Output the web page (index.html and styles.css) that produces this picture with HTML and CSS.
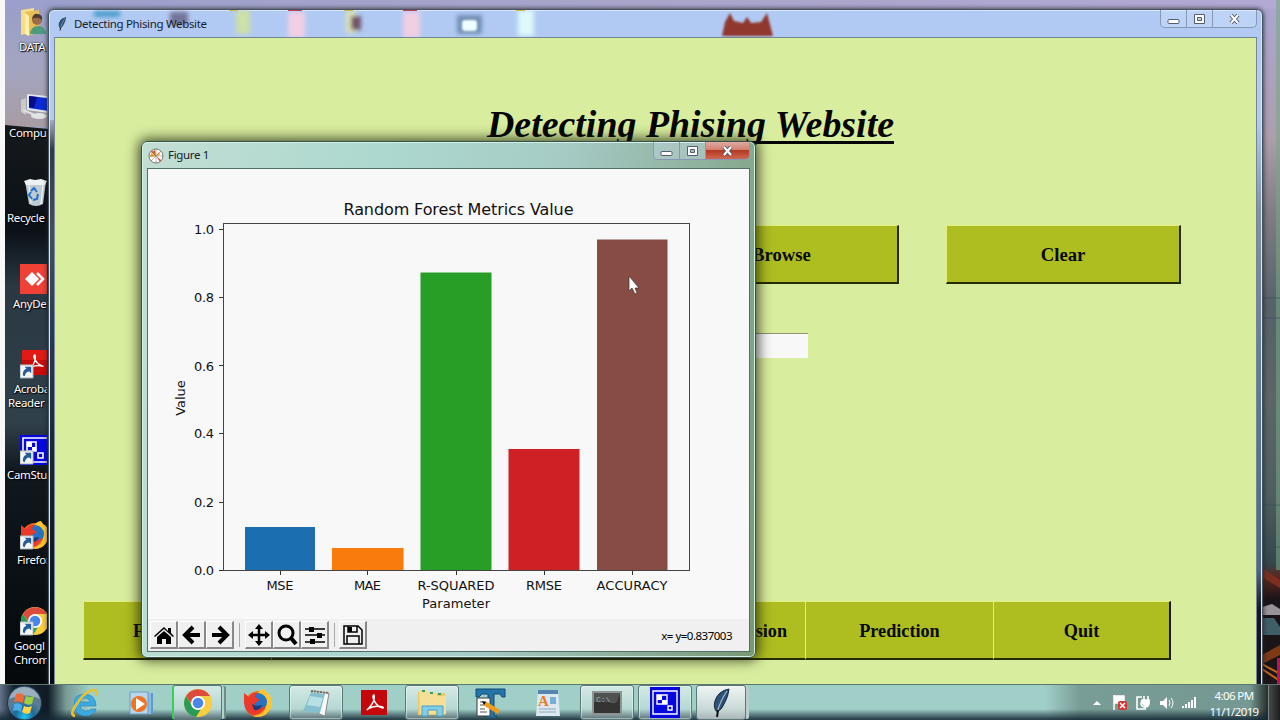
FILE: index.html
```html
<!DOCTYPE html>
<html lang="en">
<head>
    <meta charset="UTF-8">
    <title>Detecting Phising Website</title>
    <link rel="stylesheet" href="styles.css">
</head>
<body>
<div class="desktop">

    <svg class="wallpaper" width="1280" height="720">
        <defs>
            <linearGradient id="skyLeft" x1="0" y1="0" x2="0" y2="1">
                <stop offset="0" stop-color="#9a9fc8"/>
                <stop offset=".5" stop-color="#a3a5c0"/>
                <stop offset="1" stop-color="#a89ca4"/>
            </linearGradient>
            <linearGradient id="ground" x1="0" y1="0" x2="0" y2="1">
                <stop offset="0" stop-color="#15191c"/>
                <stop offset=".18" stop-color="#0b1117"/>
                <stop offset=".27" stop-color="#293843"/>
                <stop offset=".5" stop-color="#30404b"/>
                <stop offset=".58" stop-color="#10181e"/>
                <stop offset="1" stop-color="#030609"/>
            </linearGradient>
            <linearGradient id="skyTop" x1="0" y1="0" x2="1" y2="0">
                <stop offset="0" stop-color="#9aa0cb"/>
                <stop offset=".5" stop-color="#a9a5ca"/>
                <stop offset="1" stop-color="#b2a9d4"/>
            </linearGradient>
            <linearGradient id="rightSide" x1="0" y1="0" x2="0" y2="1">
                <stop offset="0" stop-color="#aaa6cf"/>
                <stop offset=".18" stop-color="#ad9eae"/>
                <stop offset=".28" stop-color="#827f86"/>
                <stop offset=".42" stop-color="#56616a"/>
                <stop offset=".55" stop-color="#5c6666"/>
                <stop offset=".68" stop-color="#4f5e60"/>
                <stop offset=".78" stop-color="#35464d"/>
                <stop offset=".8" stop-color="#5b261d"/>
                <stop offset=".83" stop-color="#1b1418"/>
                <stop offset="1" stop-color="#1d1516"/>
            </linearGradient>
        </defs>
        <rect width="1280" height="720" fill="url(#skyTop)"/>
        <rect y="9" width="60" height="118" fill="url(#skyLeft)"/>
        <path d="M5 125 60 130V720H5Z" fill="url(#ground)"/>
        <rect x="1256" y="9" width="24" height="711" fill="url(#rightSide)"/>
        <rect x="1276" width="4" height="570" fill="#79a882" opacity=".55"/>
        <path d="M1262 298h18M1262 318h18M1262 505h18M1262 547h18" stroke="#344c5c" opacity=".6"/>
        <path d="M1262 568l18 12v8l-18-11z" fill="#7c2f20"/>
        <path d="M1262 607l10-3 8 5v6h-18z" fill="#99939a"/>
        <path d="M1262 618h12l6 9v8h-18z" fill="#3f5f68"/>
        <path d="M1262 655l18-10v10l-18 9z" fill="#7e3a16"/>
        <path d="M1262 664l18 10M1262 669l18 12" stroke="#c56a1d" stroke-width="2"/>
        <path d="M1277 658h3v26h-3z" fill="#a71d58"/>
        <rect width="5" height="720" fill="#f8f8f8"/>
    </svg>

    <div class="shortcuts">
        <div class="shortcut data">
            <svg width="28" height="30" viewBox="0 0 28 30"><path d="M1 3l13-2v24L1 28z" fill="#f6dc87"/><path d="M5 5l14-2v23L7 29z" fill="#e7bf58"/><path d="M5 6l4 3v20l-4-2z" fill="#fff0a9"/><circle cx="17" cy="13" r="5" fill="#9b6b4a"/><path d="M12 12q1-6 6-5 5 1 4 6-4-4-10-1z" fill="#4c3b32"/><path d="M10 27q1-8 8-8t8 8z" fill="#4d9b7d"/></svg>
            <span>DATA</span>
        </div>
        <div class="shortcut computer">
            <svg width="28" height="30" viewBox="0 0 28 30"><path d="M1 7l5-2v17l-5-3z" fill="#c9ccc4"/><path d="M7 1l21 2v17L7 17z" fill="#dfe6ef"/><path d="M9 3l19 2v13L9 15z" fill="#0b2bd2"/><path d="M9 3l8 1-3 11-5-1z" fill="#0a0c87"/><path d="M3 17l14 6" stroke="#dfe3e5" stroke-width="2"/><ellipse cx="19" cy="23" rx="8" ry="3" fill="#dfe3e5"/></svg>
            <span>Compu</span>
        </div>
        <div class="shortcut recycle">
            <svg width="28" height="30" viewBox="0 0 28 30"><path d="M5 3h21l-3 23q-7 4-14 0z" fill="#bfcbd3"/><path d="M4 3l6-2 5 1 6-1 6 2-2 4H6z" fill="#edf1f3"/><path d="M9 7l2 18M23 7l-2 19" stroke="#f5f9fa"/><path d="M11 13l3-3 3 4M18 16l-1 5-4 1M12 21l-3-4 2-3" fill="none" stroke="#2170c9" stroke-width="2"/></svg>
            <span>Recycle</span>
        </div>
        <div class="shortcut anydesk">
            <svg width="28" height="30" viewBox="0 0 28 30"><path d="M0 0h28v30H0z" fill="#ef4135"/><path d="M12 8l7 7-7 7-7-7z" fill="#fff"/><path d="M17 9l6 6-6 6" fill="none" stroke="#fff" stroke-width="2.5"/></svg>
            <span>AnyDe</span>
        </div>
        <div class="shortcut acrobat">
            <svg width="28" height="30" viewBox="0 0 28 30"><path d="M2 1h26v25H2z" fill="#c80b0b"/><path d="M2 1h26v10H2z" fill="#e11a16"/><path d="M15 6c-3 0 0 8 7 11 4 1-4-2-10 1-3 3 5-5 3-12z" fill="none" stroke="#fff" stroke-width="1.300"/><use href="#link"/></svg>
            <span>Acroba<br>Reader I</span>
        </div>
        <div class="shortcut cam">
            <svg width="28" height="30" viewBox="0 0 28 30"><path d="M0 0h28v30H0z" fill="#0505e2"/><path d="M28 3H3v24h25M7 7h9v9H7zM18 18h5v5h-5z" fill="none" stroke="#fff" stroke-width="1.600"/><path d="M7 7h5v5H7zM12 12h4v4h-4z" fill="#fff"/><use href="#link"/></svg>
            <span>CamStu</span>
        </div>
        <div class="shortcut fox">
            <svg width="28" height="30" viewBox="0 0 28 30"><use href="#firefox" width="30" height="30"/><use href="#link"/></svg>
            <span>Firefo:</span>
        </div>
        <div class="shortcut google">
            <svg width="28" height="30" viewBox="0 0 28 30"><use href="#chrome" width="30" height="30"/><use href="#link"/></svg>
            <span>Googl<br>Chrom</span>
        </div>
    </div>

    <!-- main Tk window -->
    <div class="window main-window">
        <svg class="glass" width="1213" height="28">
            <filter id="soft" x="-30%" y="-30%" width="160%" height="160%"><feGaussianBlur stdDeviation="2"/></filter>
            <g filter="url(#soft)">
                <path d="M45 1h26v6H45z" fill="#4c9ccb"/>
                <path d="M121 2h18v13h-18z" fill="#757499"/>
                <path d="M187 0h14v24h-14z" fill="#cce0a8"/>
                <path d="M239 2h17v26h-17z" fill="#f1cfe5"/>
                <path d="M297 1h10v22h-10z" fill="#dae3b4"/>
                <path d="M302 6h10v14h-10z" fill="#6f5366"/>
                <path d="M354 2h17v26h-17z" fill="#efcfe4"/>
                <path d="M408 5h25v19h-25z" fill="#718fb3"/>
                <path d="M469 0h16v26h-16z" fill="#def8fb"/>
            </g>
            <filter id="edge"><feGaussianBlur stdDeviation=".9"/></filter>
            <rect x="413" y="10" width="15" height="11" rx="3" fill="#efffff" filter="url(#edge)"/>
            <path filter="url(#edge)" d="M673 26l3-14 5-9 4 8 9 2 4-6 4 6 10-1 6-9 6 23z" fill="#90372d"/>
            <path d="M180 0h9M295 0h9M467 0h9" stroke="#d9b947" stroke-width="2"/>
            <path d="M239 0h14M354 0h14" stroke="#c5414e" stroke-width="2"/>
        </svg>
        <div class="titlebar">
            <svg width="12" height="14" viewBox="0 0 20 30"><use href="#feather"/></svg>
            <span>Detecting Phising Website</span>
            <div class="controls">
                <i class="ctl"><svg width="13" height="12"><use href="#min"/></svg></i>
                <i class="ctl"><svg width="13" height="12"><use href="#max"/></svg></i>
                <i class="ctl close"><svg width="13" height="12"><use href="#x"/></svg></i>
            </div>
        </div>
        <div class="client">
            <h1>Detecting Phising Website</h1>
            <div class="row top-row">
                <button>Browse</button>
                <button>Clear</button>
            </div>
            <div class="entry"></div>
            <div class="row bottom-row">
                <button class="first">F</button>
                <button class="second">sion</button>
                <button>Prediction</button>
                <button>Quit</button>
            </div>
        </div>
    </div>

    <!-- matplotlib figure -->
    <div class="window figure-window">
        <div class="titlebar">
            <svg width="16" height="16" viewBox="0 0 16 16"><circle cx="8" cy="8" r="7" fill="#fff" stroke="#6f7779"/><path d="M8 8L3 4l4-2zM8 8l5 4-1 2z" fill="#df582d"/><path d="M8 8L2 9l1-4zM8 8l3-4 1 3z" fill="#e6a32a"/><path d="M8 1v14M1 8h14M3 3l10 10M13 3L3 13" stroke="#8a7250" stroke-width=".5"/></svg>
            <span>Figure 1</span>
            <div class="controls">
                <i class="ctl"><svg width="13" height="12"><use href="#min"/></svg></i>
                <i class="ctl"><svg width="13" height="12"><use href="#max"/></svg></i>
                <i class="ctl close"><svg width="13" height="12"><use href="#x"/></svg></i>
            </div>
        </div>
        <div class="figure">
            <svg class="chart" width="601" height="450" viewBox="148 169 601 450">
                <text class="chart-title" x="458.500" y="215" text-anchor="middle" textLength="230">Random Forest Metrics Value</text>
                <rect x="245" y="527" width="70" height="44" fill="#1b6fb1"/>
                <rect x="332" y="548" width="71.500" height="23" fill="#f87b0b"/>
                <rect x="420.500" y="272.500" width="71" height="298" fill="#279f27"/>
                <rect x="508.500" y="449" width="71" height="122" fill="#cf2026"/>
                <rect x="597" y="239.500" width="70.500" height="331" fill="#874c44"/>
                <rect x="223.500" y="223.500" width="466" height="347" fill="none" stroke="#444"/>
                <path d="M219 229.500h4M219 297.500h4M219 365.500h4M219 433.500h4M219 502.500h4M219 570.500h4M280.500 571v4M367.500 571v4M456.500 571v4M544.500 571v4M632.500 571v4" stroke="#333"/>
                <g text-anchor="end">
                    <text x="214" y="234" textLength="20">1.0</text>
                    <text x="214" y="302" textLength="20">0.8</text>
                    <text x="214" y="371" textLength="20">0.6</text>
                    <text x="214" y="438" textLength="20">0.4</text>
                    <text x="214" y="507" textLength="20">0.2</text>
                    <text x="214" y="575" textLength="20">0.0</text>
                </g>
                <g text-anchor="middle">
                    <text x="280" y="589.500" textLength="27">MSE</text>
                    <text x="367.500" y="589.500" textLength="27">MAE</text>
                    <text x="456" y="589.500" textLength="77">R-SQUARED</text>
                    <text x="544" y="589.500" textLength="36">RMSE</text>
                    <text x="632" y="589.500" textLength="71">ACCURACY</text>
                    <text x="456" y="607.500" textLength="68">Parameter</text>
                    <text transform="translate(185 398) rotate(-90)">Value</text>
                </g>
            </svg>
            <div class="toolbar">
                <i class="tool"><svg width="22" height="22"><path d="M1 12L11 3l4 4V4h3v5l3 3-1 1-9-8-9 8z"/><path d="M4 13l7-6 7 6v7h-5v-5H9v5H4z"/></svg></i>
                <i class="tool"><svg width="22" height="22"><path d="M19 11H5M12 3l-8 8 8 8" fill="none" stroke="#000" stroke-width="4"/></svg></i>
                <i class="tool"><svg width="22" height="22"><path d="M3 11h14M10 3l8 8-8 8" fill="none" stroke="#000" stroke-width="4"/></svg></i>
                <b class="sep"></b>
                <i class="tool"><svg width="22" height="22"><path d="M11 2v18M2 11h18" stroke="#000" stroke-width="2.500"/><path d="M11 0l4 5H7zM11 22l-4-5h8zM0 11l5-4v8zM22 11l-5 4V7z"/></svg></i>
                <i class="tool"><svg width="22" height="22"><circle cx="10" cy="9" r="7" fill="none" stroke="#000" stroke-width="3"/><path d="M15 14l5 6" stroke="#000" stroke-width="4"/></svg></i>
                <i class="tool"><svg width="22" height="22"><path d="M1 5h20M1 11h20M1 18h20" stroke="#000" stroke-width="1.500"/><path d="M5 3h5v5H5zM13 9h5v5h-5zM6 15h5v5H6z"/></svg></i>
                <b class="sep save-sep"></b>
                <i class="tool"><svg width="22" height="22"><path d="M2 2h14l4 4v14H2zM5 20v-8h12v8M6 2v6h9V2" fill="none" stroke="#000" stroke-width="1.500"/><path d="M6 3h4v5H6z"/></svg></i>
                <span class="coords">x= y=0.837003</span>
            </div>
        </div>
    </div>

    <div class="taskbar">
        <div class="start"><svg width="37" height="36" viewBox="0 0 37 36"><defs><radialGradient id="orb" cy=".9"><stop offset="0" stop-color="#21c5ed"/><stop offset=".55" stop-color="#1c6c9c"/><stop offset="1" stop-color="#5d7b91"/></radialGradient></defs><circle cx="18.500" cy="18" r="17" fill="url(#orb)" stroke="#1d3650"/><path d="M3 14Q7 2 18 2t16 12q-14-7-31 0z" fill="#d8e5ea" opacity=".5"/><path d="M10 9q5-2 8 1l-1 8q-5-3-9-1z" fill="#ef6b35"/><path d="M20 11q4 2 8 0l-2 8q-4 2-8-1z" fill="#9dcd45"/><path d="M8 19q5-2 8 1l-1 7q-4-3-8-1z" fill="#48aceb"/><path d="M18 21q4 2 8 0l-2 7q-4 2-8-1z" fill="#ffd247"/></svg></div>
        <div class="task"><svg width="30" height="30"><path d="M5 16q0-10 11-10 11 1 11 12H11q1 5 6 5 4 0 5-2h5q-2 7-11 7Q5 27 5 16zm6-2h10q-1-4-5-4t-5 4z" fill="#3ca9df" stroke="#2684bd" stroke-width=".6" fill-rule="evenodd"/><path d="M6 28q-6-1 1-11Q15 4 24 2q6 0 3 6" fill="none" stroke="#e9c32f" stroke-width="2.500"/></svg></div>
        <div class="task"><svg width="26" height="26"><path d="M5 3h19v21H5z" fill="#5e9acb"/><path d="M3 3h19v21H3z" fill="#8bbde2"/><path d="M1 2h18v22H1z" fill="#bcd6e9" stroke="#669abf"/><circle cx="10" cy="14" r="8" fill="#ee7423"/><path d="M7 8l9 6-9 6z" fill="#fff"/></svg></div>
        <div class="task open chrome"><svg width="30" height="30" viewBox="0 0 30 30"><use href="#chrome"/></svg></div>
        <div class="task"><svg width="30" height="30" viewBox="0 0 30 30"><use href="#firefox"/></svg></div>
        <div class="task open"><svg width="30" height="30"><path d="M10 3l18 2-4 23-6-2z" fill="#f7f9f7" stroke="#888"/><path d="M10 4l14 2-5 19-17-2z" fill="#86bfce"/><path d="M9 8l13 2-3 9-13-2z" fill="#b8dfe3"/><path d="M10 3l17 2" stroke="#7a735f" stroke-width="2" stroke-dasharray="2 1"/></svg></div>
        <div class="task"><svg width="26" height="26"><path d="M0 0h26v25H0z" fill="#c3070b"/><path d="M13 5c-3 0 1 12 9 13 2-1-8-4-15 1-4 3 8-5 6-14z" fill="none" stroke="#fff" stroke-width="1.500"/></svg></div>
        <div class="task open"><svg width="32" height="30"><path d="M2 4l7-2 3 3h17v22H2z" fill="#e7c96e"/><path d="M3 2h9v3h9v3h9v18H4z" fill="#f5df96"/><path d="M6 3h3M14 5h3M22 6h3" stroke="#3f9852" stroke-width="2"/><path d="M6 28V18h21v10h-6v-6h-9v6z" fill="#82cde7" stroke="#489fc3"/></svg></div>
        <div class="task"><svg width="31" height="31"><path d="M1 2h29v8h-3l-2-3h-6v22h3v2h-12v-2h3V7H7l-3 3H1z" fill="#2474aa" stroke="#154b71"/><path d="M2 11h13v18H2z" fill="#fff" stroke="#363b3c"/><path d="M5 15h6M5 18h8M5 22h5M5 25h7" stroke="#555"/><path d="M9 16l15 9" stroke="#ed9d20" stroke-width="4.500"/><path d="M7 14l4 1-2 3z"/></svg></div>
        <div class="task"><svg width="24" height="28"><path d="M2 1h20l2 26H0z" fill="#dce8ef"/><path d="M2 1h20v4H2z" fill="#5684b0"/><text x="2" y="17" class="wordpad">A</text><path d="M14 8h6v7h-6z" fill="#78add6"/><path d="M3 20h17M3 23h17" stroke="#8da8be"/></svg></div>
        <div class="task open cmd"><svg width="30" height="24"><path d="M1 1h28v22H1z" fill="#343434" stroke="#8d9492" stroke-width="2"/><path d="M2 2h26l-3 9H2z" fill="#505252"/><text x="4" y="11" class="prompt">C:\_</text></svg></div>
        <div class="task open"><svg width="30" height="31"><path d="M0 0h30v31H0z" fill="#0505df"/><path d="M3 4h24v23H3zM7 8h10v9H7zM18 19h4v4h-4z" fill="none" stroke="#fff" stroke-width="1.400"/><path d="M7 8h5v5H7zM12 13h5v4h-5z" fill="#fff"/></svg></div>
        <div class="task open active"><svg width="20" height="30" viewBox="0 0 20 30"><use href="#feather"/></svg></div>
        <div class="tray">
            <svg width="8" height="6"><path d="M0 5l4-4 4 4z" fill="#fff"/></svg>
            <svg width="16" height="17"><path d="M2 1v15M3 2h9v7H3z" fill="#fff" stroke="#fff" stroke-width="1.500"/><rect x="6" y="7" width="9" height="9" rx="2" fill="#d43432"/><path d="M8 9l5 5M13 9l-5 5" stroke="#fff" stroke-width="1.500"/></svg>
            <svg width="15" height="16"><path d="M6 2H1v12h7M6 5h7v4q-1 3-4 3t-4-3zM8 5V1M12 5V1M9 12v3" fill="none" stroke="#fff" stroke-width="1.600"/><path d="M6 5h7v4l-3 3-4-3z" fill="#fff"/></svg>
            <svg width="15" height="14"><path d="M1 5h3l4-4v12L4 9H1z" fill="#fff"/><path d="M10 4q2 3 0 6M12 2q4 5 0 10" fill="none" stroke="#fff"/></svg>
            <svg width="16" height="13"><path d="M0 10h2v2H0zM3 8h2v4H3zM6 6h2v6H6zM9 4h2v8H9zM12 1h2v11h-2z" fill="#fff"/></svg>
            <div class="clock">4:06 PM<br>11/1/2019</div>
        </div>
        <div class="show-desktop"></div>
    </div>

    <svg class="cursor" width="12" height="20"><path d="M1 1v15l3-3 3 6 2-1-2-5h4z" fill="#fff" stroke="#333" stroke-width=".7"/></svg>
</div>

<!-- shared icons -->
<svg class="defs" width="0" height="0">
    <symbol id="link" viewBox="0 0 30 30" overflow="visible"><path d="M0 16h14v14H0z" fill="#f3f5f7" stroke="#a6adb3"/><path d="M3 27q0-6 4-7l-2-2h7v7l-2-2q-4 0-5 5z" fill="#245b9b"/></symbol>
    <symbol id="chrome" viewBox="0 0 30 30"><circle cx="15" cy="15" r="14" fill="#f8cd3f"/><path d="M3 8a14 14 0 0 1 24 0H15l-5 10z" fill="#dc4b3c"/><path d="M3 8l7 11q3 3 8 2l-5 8A14 14 0 0 1 3 8z" fill="#299b57"/><circle cx="15" cy="15" r="7" fill="#fff"/><circle cx="15" cy="15" r="5.300" fill="#4a86e8"/></symbol>
    <symbol id="firefox" viewBox="0 0 30 30"><circle cx="15" cy="16" r="13" fill="#f56c21"/><path d="M14 7q2-6 7-6 2 4 5 5 6 9 0 17-6 8-16 5 15-2 13-15z" fill="#ffc72d"/><circle cx="15" cy="14" r="9" fill="#2573c4"/><path d="M1 15V5l5 4q4-5 8-4l-2 4 5 3-5 3q-2 6 4 6l6-3q-3 9-12 9Q2 25 1 15z" fill="#e93a2c"/><path d="M9 16q4 3 10 1-2 6-8 5z" fill="#203b7b"/></symbol>
    <symbol id="feather" viewBox="0 0 20 30"><path d="M18 1Q7 3 4 13q-2 7 2 11 5-2 8-10 3-5 4-13z" fill="#2d5278" stroke="#142439"/><path d="M16 3Q9 13 6 25" fill="none" stroke="#a9bccd" stroke-width="1.200"/><path d="M7 22L6 29" stroke="#111" stroke-width="2"/></symbol>
    <symbol id="min"><rect x="1" y="6.500" width="11" height="4" rx="1" fill="#fff" stroke="#555d70"/></symbol>
    <symbol id="max"><path d="M1.500 1.500h10v9h-10zM4.500 4.500h4v3h-4z" fill="#fff" stroke="#555d70" fill-rule="evenodd"/></symbol>
    <symbol id="x"><path d="M3 2l7 8M10 2l-7 8" stroke="#555d70" stroke-width="4"/><path d="M3 2l7 8M10 2l-7 8" stroke="#fff" stroke-width="2"/></symbol>
</svg>
</body>
</html>
```
FILE: styles.css
```css
body {
    margin: 0;
    overflow: hidden;
    font-family: "Noto Sans", "Open Sans", sans-serif;
    font-size: 12px;
}

.desktop {
    position: relative;
    width: 1280px;
    height: 720px;
    overflow: hidden;
}

svg {
    display: block;
    flex-shrink: 0;
}

.wallpaper {
    position: absolute;
}

.defs {
    position: absolute;
}

/* desktop icons */
.shortcuts {
    position: absolute;
    left: 5px;
    top: 7px;
    width: 42px;
    display: grid;
    grid-auto-rows: 85.500px;
    overflow: hidden;
}

.shortcut svg {
    margin: 0 0 3px 15px;
}

.shortcut span {
    display: block;
    padding-left: 2px;
    color: #fff;
    line-height: 14px;
    font-size: 11.500px;
    letter-spacing: -0.35px;
    white-space: nowrap;
    text-shadow: 1px 1px 1px #000, 0 0 2px #000;
}

.data span {
    padding-left: 14px;
}

.computer span {
    padding-left: 4px;
}

.anydesk span {
    padding-left: 8px;
}

.fox span {
    padding-left: 12px;
}

.google span {
    padding-left: 9px;
}

.acrobat span {
    padding-left: 9px;
    text-indent: -6px;
}

.acrobat span::first-line {
    letter-spacing: -0.35px;
}

.acrobat span {
    padding-left: 3px;
    text-indent: 6px;
}

/* windows */
.window {
    position: absolute;
    box-sizing: border-box;
    display: flex;
    flex-direction: column;
    border-radius: 6px;
}

.main-window {
    left: 48px;
    top: 9px;
    width: 1215px;
    height: 690px;
    border: 1px solid #465365;
    padding: 0 6px;
    background: linear-gradient(#b1caf4 0, #b5cbee 110px, #8091a5 200px, #60758b 400px, #526881 560px, #15151e 600px);
    box-shadow: inset 0 0 0 1px #d9e7fa, 0 0 5px #222;
}

/* the left border shows the dark part of the wallpaper */
.main-window::before {
    content: "";
    position: absolute;
    left: 1px;
    top: 110px;
    width: 4px;
    bottom: 0;
    background: linear-gradient(#a7a9c4, #343944 30px, #45505b 110px, #283b55 210px, #1a2533 340px, #05070d);
}

.glass {
    position: absolute;
    left: 0;
    top: 0;
}

.titlebar {
    position: relative;
    display: flex;
    align-items: center;
    height: 27px;
    flex-shrink: 0;
    color: #17202b;
    font-size: 11.500px;
    letter-spacing: -0.34px;
}

.main-window .titlebar {
    padding-left: 1px;
    gap: 6px;
}

.controls {
    align-self: flex-start;
    display: flex;
    margin-left: auto;
    margin-right: -1px;
    height: 17px;
    border: 1px solid #8898b3;
    border-top: 0;
    border-radius: 0 0 5px 5px;
    overflow: hidden;
}

.ctl {
    width: 25px;
    display: flex;
    align-items: center;
    justify-content: center;
    border-right: 1px solid #8898b3;
    background: rgba(220, 232, 255, 0.3);
}

.ctl.close {
    width: 43px;
    border: 0;
}

.client {
    position: relative;
    flex: 1;
    background: #d8ee9e;
    border: 1px solid #718894;
    margin: 0 -1px;
    box-sizing: border-box;
}

h1 {
    width: 407px;
    height: 44px;
    margin: 62px 0 0 432px;
    font: italic bold 37.900px/48px "Liberation Serif", serif;
    white-space: nowrap;
    text-decoration: underline;
    text-decoration-thickness: 3px;
    text-underline-offset: 4px;
    text-decoration-skip-ink: none;
    color: #050505;
}

button {
    box-sizing: border-box;
    padding: 2px 0 0;
    background: #aebd20;
    border: solid;
    border-width: 1px 2px 2px 1px;
    border-color: #e2ee82 #252b09 #252b09 #e2ee82;
    font: bold 18.700px "Liberation Serif", serif;
    color: #080a02;
}

.row {
    display: flex;
}

.top-row {
    margin: 81px 0 0 610px;
    gap: 47px;
}

.top-row button {
    width: 235px;
    height: 59px;
}

.top-row button:first-child {
    width: 234px;
}

.entry {
    width: 153px;
    height: 24px;
    margin: 49px 0 0 600px;
    background: #f8f8f8;
    border-top: 1px solid #8c9474;
}

.bottom-row {
    margin: 243px 0 0 28px;
    width: 1088px;
}

.bottom-row button {
    height: 59px;
    width: 188px;
    border-right: 0;
    font-size: 18.200px;
}

.bottom-row .first {
    padding-left: 49px;
    text-align: left;
}

.bottom-row .second {
    width: 534px;
    padding-right: 18px;
    text-align: right;
}

.bottom-row button:last-child {
    width: 178px;
    border-right: 2px solid #171b05;
}

.figure-window {
    left: 141px;
    top: 141px;
    width: 615px;
    height: 517px;
    padding: 0 6px 6px;
    border: 1px solid #38514b;
    background: linear-gradient(100deg, #c3ded3, #acd8cf 35%, #a6cbc6 60%, #789875);
    box-shadow: inset 0 0 0 1px #d5f0e7, 0 0 13px 2px rgba(20, 25, 8, 0.8);
}

.figure-window .titlebar {
    gap: 4px;
}

.figure-window .titlebar > span {
    padding-bottom: 2px;
}

.figure-window .close {
    background: linear-gradient(#dfaaa0 0, #d48073 45%, #b43824 50%, #cd684e);
}

.figure {
    flex: 1;
    background: #f8f8f8;
    outline: 1px solid #526e69;
}

.chart {
    font-family: "DejaVu Sans", sans-serif;
    font-size: 13px;
    fill: #111;
}

.chart-title {
    font-size: 16px;
}

.toolbar {
    display: flex;
    align-items: center;
    height: 32px;
    background: #f0f0f0;
    padding-left: 2px;
}

.tool {
    box-sizing: border-box;
    width: 28px;
    height: 28px;
    padding: 2px;
    border: solid;
    border-width: 1px 2px 2px 1px;
    border-color: #fff #888 #888 #fff;
}

.sep {
    width: 1px;
    height: 24px;
    margin: 0 5px;
    background: #aaa;
}

.save-sep {
    margin-right: 4px;
}

.coords {
    margin-left: auto;
    padding-right: 17px;
    font-size: 11.500px;
    letter-spacing: -0.5px;
}

/* taskbar */
.taskbar {
    position: absolute;
    left: 0;
    top: 684px;
    width: 1280px;
    height: 36px;
    box-sizing: border-box;
    display: flex;
    border-top: 1px solid #5c7770;
    background:
        linear-gradient(transparent 24px, rgba(20, 40, 52, 0.85) 34px),
        linear-gradient(90deg, #65748b 0, #14212e 14px, #101b26 48px, #799b98 66px, #a0cfc8 90px, #a0cfc8 1045px, #789c96 1080px, #759992 1250px, #1c2020 1270px);
}

.start {
    width: 49px;
    padding-left: 6px;
}

.task {
    box-sizing: border-box;
    width: 54px;
    margin: 0 2px;
    display: flex;
    align-items: center;
    justify-content: center;
    flex-shrink: 0;
}

.task.open {
    border: 1px solid #5b7776;
    border-radius: 3px;
    background: linear-gradient(rgba(255, 255, 255, 0.55), rgba(225, 235, 232, 0.35) 65%, rgba(190, 205, 207, 0.35));
    box-shadow: inset 0 0 0 1px rgba(240, 255, 250, 0.45);
}

.task.chrome {
    width: 50px;
    margin: 0 7px 0 1px;
    border-left: 2px solid #38ce58;
    box-shadow: 3px 0 0 -1px #b2d2cd, 5px 0 0 -1px #708b88;
}

.task.cmd {
    margin-left: 3px;
}

.task.active {
    width: 50px;
    background: linear-gradient(#eef5f4, #c8d9d8 70%, #a9b5ba);
    box-shadow: 4px 0 0 -1px #b8cdcc;
}

.wordpad {
    font: bold 15px "Liberation Serif", serif;
    fill: #ef7b20;
}

.prompt {
    font: 8px "Liberation Mono", monospace;
    fill: #aaa;
}

.tray {
    margin-left: auto;
    display: flex;
    align-items: center;
    gap: 8px;
}

.tray > svg:first-child {
    margin-right: 3px;
}

.clock {
    width: 56px;
    color: #fff;
    font-size: 11.500px;
    line-height: 15.500px;
    letter-spacing: -0.6px;
    text-align: center;
    white-space: nowrap;
    align-self: flex-start;
    padding-top: 3px;
}

.show-desktop {
    width: 11px;
    margin-left: 6px;
    border-left: 1px solid #7c8484;
    background: linear-gradient(90deg, #444a49, #211d1e);
}

.cursor {
    position: absolute;
    left: 628px;
    top: 275px;
}
```
